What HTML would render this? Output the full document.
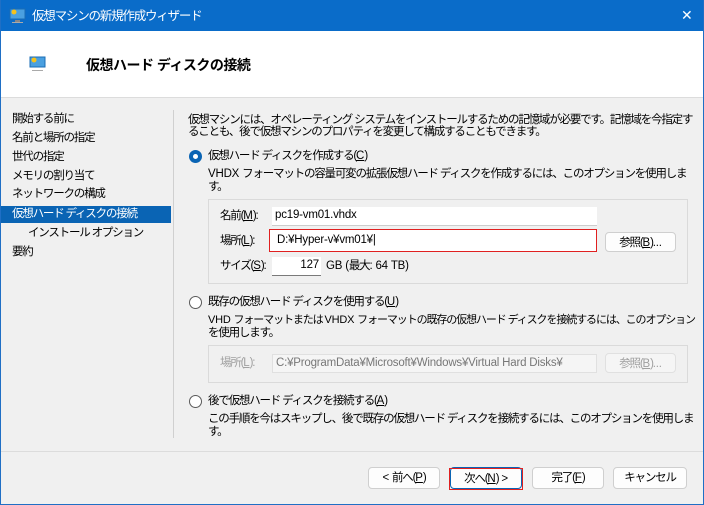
<!DOCTYPE html><html><head><meta charset="utf-8"><style>
*{margin:0;padding:0;box-sizing:border-box}
body{width:704px;height:505px;overflow:hidden;background:#f0f0f0;font-family:"Liberation Sans","Noto Sans CJK JP",sans-serif;font-size:11.5px;letter-spacing:-1.2px;color:#000;position:relative}
.a{position:absolute;white-space:nowrap;line-height:14px}
.l{letter-spacing:-0.2px}
.win{position:absolute;left:0;top:0;width:704px;height:505px;border:1px solid #1f6fc5;border-top:none}
.tb{position:absolute;left:0;top:0;width:704px;height:31px;background:#0a6cc9;color:#fff}
.hd{position:absolute;left:1px;top:31px;width:702px;height:67px;background:#fff;border-bottom:1px solid #dcdcdc}
.box{position:absolute;border:1px solid #dadada}
.in{position:absolute;background:#fff;border-bottom:1px solid #7a7a7a;padding-left:3px;line-height:17px;letter-spacing:-0.2px}
.btn{position:absolute;background:#fdfdfd;border:1px solid #cfcfcf;border-radius:4px;text-align:center;line-height:20px}
.r{position:absolute;width:13px;height:13px;border-radius:50%;border:1px solid #5a5a5a;background:#fff}
.dis{color:#a0a0a0}
u{text-decoration:underline;letter-spacing:0}
</style></head><body>
<div class="tb">
<svg class="a" style="left:9px;top:8px" width="17" height="16"><rect x="1" y="1" width="15" height="10" fill="#4aa0e0" stroke="#1b6db5"/><circle cx="5" cy="4" r="2.5" fill="#f6c21a"/><rect x="6" y="12" width="5" height="2" fill="#888"/><rect x="3" y="14" width="11" height="1" fill="#aaa"/></svg>
<div class="a" style="left:32px;top:9px;font-size:12.5px">仮想マシンの新規作成ウィザード</div>
<div class="a" style="left:681px;top:8px;font-size:14px;letter-spacing:0">✕</div>
</div>
<div class="hd">
<svg class="a" style="left:28px;top:25px" width="17" height="16"><rect x="1" y="1" width="15" height="10" fill="#4aa0e0" stroke="#1b6db5"/><circle cx="5" cy="4" r="2.5" fill="#f6c21a"/><rect x="3" y="14" width="11" height="1" fill="#aaa"/></svg>
<div class="a" style="left:85px;top:27px;font-size:14px;font-weight:bold;letter-spacing:-0.5px">仮想ハード ディスクの接続</div>
</div>
<div class="win"></div>
<div class="a" style="left:12px;top:112px">開始する前に</div>
<div class="a" style="left:12px;top:131px">名前と場所の指定</div>
<div class="a" style="left:12px;top:150px">世代の指定</div>
<div class="a" style="left:12px;top:169px">メモリの割り当て</div>
<div class="a" style="left:12px;top:187px">ネットワークの構成</div>
<div class="a" style="left:1px;top:206px;width:170px;height:17px;background:#0a64b4"></div>
<div class="a" style="left:12px;top:207px;color:#fff">仮想ハード ディスクの接続</div>
<div class="a" style="left:28px;top:226px">インストール オプション</div>
<div class="a" style="left:12px;top:245px">要約</div>
<div class="a" style="left:173px;top:110px;width:1px;height:328px;background:#d0d0d0"></div>
<div class="a" style="left:188px;top:113px">仮想マシンには、オペレーティング システムをインストールするための記憶域が必要です。記憶域を今指定す</div>
<div class="a" style="left:188px;top:125px">ることも、後で仮想マシンのプロパティを変更して構成することもできます。</div>
<div class="r" style="left:189px;top:150px;border:4px solid #0a64b4"></div>
<div class="a" style="left:208px;top:149px">仮想ハード ディスクを作成する(<u>C</u>)</div>
<div class="a" style="left:208px;top:167px"><span class="l">VHDX </span>フォーマットの容量可変の拡張仮想ハード ディスクを作成するには、このオプションを使用しま</div>
<div class="a" style="left:208px;top:180px">す。</div>
<div class="box" style="left:208px;top:199px;width:480px;height:85px"></div>
<div class="a" style="left:220px;top:209px">名前(<u>M</u>):</div>
<div class="in" style="left:272px;top:207px;width:325px;height:19px;border-bottom-color:#ccc">pc19-vm01.vhdx</div>
<div class="a" style="left:220px;top:234px">場所(<u>L</u>):</div>
<div class="in" style="left:269px;top:229px;width:328px;height:23px;border:1px solid #e02020;line-height:21px;padding-left:7px">D:¥Hyper-v¥vm01¥|</div>
<div class="btn" style="left:605px;top:232px;width:71px;height:20px">参照(<u>B</u>)<span class="l">...</span></div>
<div class="a" style="left:220px;top:259px">サイズ(<u>S</u>):</div>
<div class="in" style="left:272px;top:257px;width:49px;height:19px;text-align:right;padding-right:2px">127</div>
<div class="a" style="left:326px;top:259px"><span class="l">GB (</span>最大<span class="l">: 64 TB)</span></div>
<div class="r" style="left:189px;top:296px"></div>
<div class="a" style="left:208px;top:295px">既存の仮想ハード ディスクを使用する(<u>U</u>)</div>
<div class="a" style="left:208px;top:313px;font-size:11px;letter-spacing:-1.1px"><span class="l">VHD </span>フォーマットまたは <span class="l">VHDX </span>フォーマットの既存の仮想ハード ディスクを接続するには、このオプション</div>
<div class="a" style="left:208px;top:326px">を使用します。</div>
<div class="box" style="left:208px;top:345px;width:480px;height:38px"></div>
<div class="a dis" style="left:220px;top:356px">場所(<u>L</u>):</div>
<div class="in dis" style="left:272px;top:354px;width:325px;height:19px;background:#f5f5f5;border:1px solid #e0e0e0;color:#777">C:¥ProgramData¥Microsoft¥Windows¥Virtual Hard Disks¥</div>
<div class="btn dis" style="left:605px;top:353px;width:71px;height:20px;background:#f5f5f5;border-color:#e0e0e0">参照(<u>B</u>)<span class="l">...</span></div>
<div class="r" style="left:189px;top:395px"></div>
<div class="a" style="left:208px;top:394px">後で仮想ハード ディスクを接続する(<u>A</u>)</div>
<div class="a" style="left:208px;top:412px">この手順を今はスキップし、後で既存の仮想ハード ディスクを接続するには、このオプションを使用しま</div>
<div class="a" style="left:208px;top:425px">す。</div>
<div class="a" style="left:1px;top:451px;width:702px;height:1px;background:#dcdcdc"></div>
<div class="btn" style="left:368px;top:467px;width:72px;height:22px"><span class="l">&lt; </span>前へ(<u>P</u>)</div>
<div class="btn" style="left:450px;top:467px;width:72px;height:22px;border:1px solid #0a64b4"></div>
<div class="a" style="left:449px;top:468px;width:74px;height:22px;border:1px solid #e02020;text-align:center;line-height:20px">次へ(<u>N</u>)<span class="l"> &gt;</span></div>
<div class="btn" style="left:532px;top:467px;width:72px;height:22px">完了(<u>F</u>)</div>
<div class="btn" style="left:613px;top:467px;width:74px;height:22px">キャンセル</div>
</body></html>
